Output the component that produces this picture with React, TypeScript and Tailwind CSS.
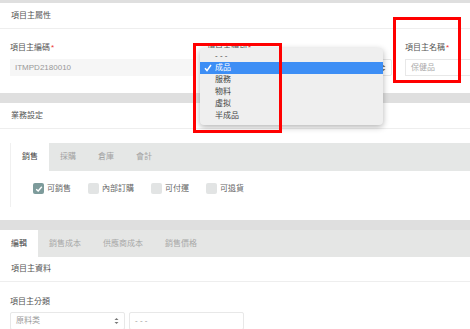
import React from "react";

const FONT = "font-['Liberation_Sans','Noto_Sans_CJK_TC',sans-serif]";

const Arrows = ({ className = "" }: { className?: string }) => (
  <svg width="5" height="8" viewBox="0 0 5 8" className={className}>
    <path d="M0.5 3 L2.5 1 L4.5 3 Z" fill="#777" />
    <path d="M0.5 5 L2.5 7 L4.5 5 Z" fill="#777" />
  </svg>
);

const Label = ({ text, required }: { text: string; required?: boolean }) => (
  <div className="h-[10px] text-[8px] leading-[10px] text-[#555]">
    {text}
    {required && <span className="ml-[1px] text-[#e33]">*</span>}
  </div>
);

const Checkbox = ({ label, checked }: { label: string; checked?: boolean }) => (
  <label className="flex items-center gap-[3px]">
    <span
      className={
        "flex h-[11px] w-[11px] items-center justify-center rounded-[2px] " +
        (checked ? "bg-[#7d9b9b]" : "bg-[#e2e4e4]")
      }
    >
      {checked && (
        <svg width="8" height="8" viewBox="0 0 8 8">
          <path d="M1.2 4.2 L3.2 6 L6.8 1.8" stroke="#fff" strokeWidth="1.4" fill="none" />
        </svg>
      )}
    </span>
    <span className="text-[8px] text-[#666]">{label}</span>
  </label>
);

const options = ["- - -", "成品", "服務", "物料", "虛拟", "半成品"];

export default function App() {
  return (
    <div className={`relative h-[329px] w-[470px] overflow-hidden bg-[#dfdfdf] pt-[3px] ${FONT}`}>
      {/* 項目主屬性 */}
      <section className="h-[90px] bg-white">
        <div className="flex h-[26px] items-center border-b border-[#eeeeee] px-[11px] text-[8px] text-[#555]">
          項目主屬性
        </div>
        <div className="flex gap-[12px] px-[10px] pt-[14px]">
          <div className="w-[185px] shrink-0">
            <Label text="項目主編碼" required />
            <div className="mt-[6px] flex h-[17px] items-center bg-[#f6f6f6] px-[5px] text-[8px] text-[#999]">
              ITMPD2180010
            </div>
          </div>
          <div className="w-[185px] shrink-0">
            <Label text="項目主類別" required />
            {/* the open popup covers this select's value */}
            <div className="mt-[6px] flex h-[17px] items-center justify-end rounded-[2px] border border-[#e6e6e6] px-[5px]">
              <Arrows />
            </div>
          </div>
          <div className="w-[185px] shrink-0 pl-[1px]">
            <Label text="項目主名稱" required />
            <div className="mt-[6px] flex h-[17px] items-center border border-[#e8e8e8] px-[5px] text-[8px] text-[#aaa]">
              保健品
            </div>
          </div>
        </div>
      </section>

      {/* 業務設定 */}
      <section className="mt-[10px] h-[117px] bg-white">
        <div className="flex h-[26px] items-center border-b border-[#eeeeee] px-[11px] text-[8px] text-[#555]">
          業務設定
        </div>
        <div className="ml-[10px] mt-[14px] border-l border-[#f0f0f0]">
          <div className="flex h-[28px] bg-[#e5e7e6] text-[8px]">
            {["銷售", "採購", "倉庫", "會計"].map((t, i) => (
              <div
                key={t}
                className={
                  "flex w-[38px] items-center justify-center " +
                  (i === 0 ? "bg-white text-[#444]" : "text-[#a3a3a3]")
                }
              >
                {t}
              </div>
            ))}
          </div>
          <div className="flex h-[36px] items-center gap-[17px] pl-[22px] pb-[1px]">
            <Checkbox label="可銷售" checked />
            <Checkbox label="內部訂購" />
            <Checkbox label="可付運" />
            <Checkbox label="可退貨" />
          </div>
        </div>
      </section>

      {/* 編輯 */}
      <section className="mt-[10px] bg-white">
        <div className="flex h-[27px] bg-[#e5e6e5] text-[8px]">
          {["編輯", "銷售成本", "供應商成本", "銷售價格"].map((t, i) => (
            <div
              key={t}
              className={
                "flex items-center px-[11px] " +
                (i === 0 ? "bg-white text-[#444]" : "text-[#a8a8a8]")
              }
            >
              {t}
            </div>
          ))}
        </div>
        <div className="flex h-[25px] items-center border-b border-[#eeeeee] px-[11px] text-[8px] text-[#555]">
          項目主資料
        </div>
        <div className="px-[10px] pt-[15px]">
          <Label text="項目主分類" />
          <div className="mt-[5px] flex gap-[4px]">
            <div className="flex h-[18px] w-[115px] items-center justify-between rounded-[2px] border border-[#e8e8e8] px-[5px] text-[8px] text-[#999]">
              <span>原料类</span>
              <Arrows />
            </div>
            <div className="flex h-[18px] w-[115px] items-center rounded-[2px] border border-[#e8e8e8] px-[5px] text-[8px] text-[#999]">
              - - -
            </div>
          </div>
        </div>
      </section>

      {/* native select popup */}
      <div className="absolute left-[200px] top-[48px] w-[183px] rounded-[4px] bg-[#efefef] pb-[3px] pt-[2px] shadow-[0_2px_6px_rgba(0,0,0,0.3)]">
        {options.map((o, i) => (
          <div
            key={o}
            className={
              "relative flex h-[12px] items-center pl-[15px] text-[8px] " +
              (i === 1 ? "bg-[#3d8ef5] text-white" : "text-[#444]")
            }
          >
            {i === 1 && (
              <svg width="8" height="8" viewBox="0 0 8 8" className="absolute left-[4px] top-[2px]">
                <path d="M1 4.3 L3 6.6 L7 1" stroke="#fff" strokeWidth="1.5" fill="none" />
              </svg>
            )}
            {o}
          </div>
        ))}
      </div>

      {/* annotation boxes */}
      <div className="absolute left-[193px] top-[43px] h-[90px] w-[89px] border-[3px] border-[#f00]" />
      <div className="absolute left-[393px] top-[17px] h-[66px] w-[68px] border-[3px] border-[#f00]" />
    </div>
  );
}
